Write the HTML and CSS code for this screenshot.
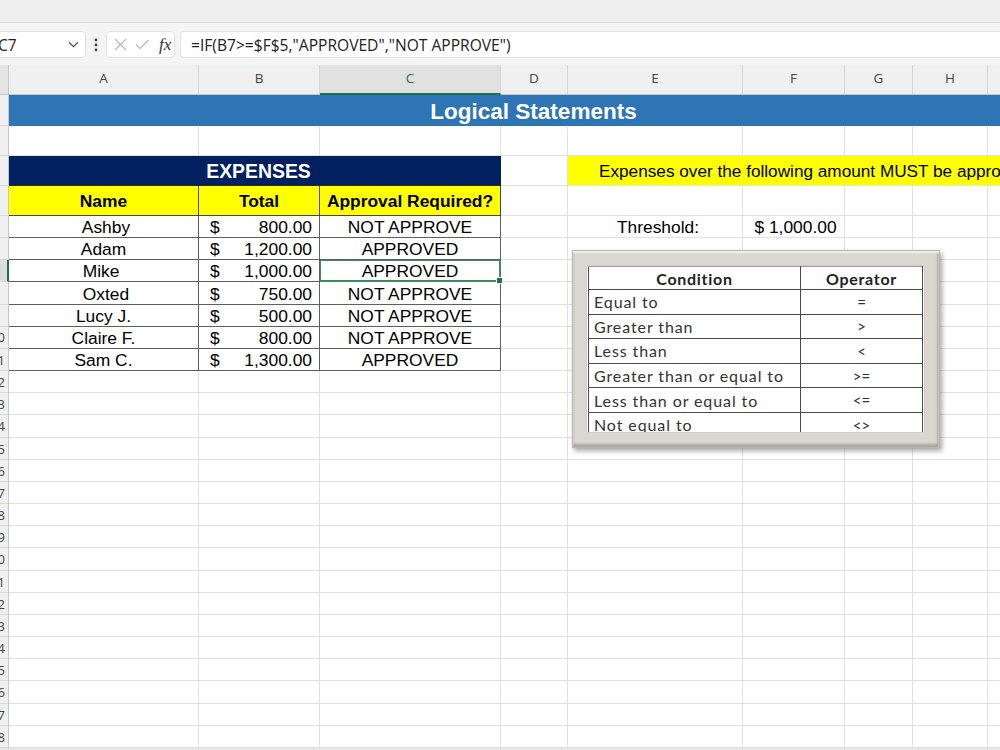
FILE: index.html
```html
<!DOCTYPE html>
<html>
<head>
<meta charset="utf-8">
<link rel="stylesheet" href="styles.css">
</head>
<body>
<div class="app">
  <div class="topstrip"></div>
  <div class="fbar">
    <div class="namebox">
      <span class="nb-text">C7</span>
      <svg class="chev" width="11" height="7" viewBox="0 0 11 7"><path d="M1 1.2l4.5 4.5 4.5-4.5" fill="none" stroke="#555" stroke-width="1.3"/></svg>
    </div>
    <svg class="kebab" width="4" height="14" viewBox="0 0 4 14"><circle cx="2" cy="2" r="1.4" fill="#444"/><circle cx="2" cy="7" r="1.4" fill="#444"/><circle cx="2" cy="12" r="1.4" fill="#444"/></svg>
    <div class="fxbox">
      <svg width="13" height="13" viewBox="0 0 13 13"><path d="M1 1l11 11M12 1L1 12" stroke="#b8b8b8" stroke-width="1.2" fill="none"/></svg>
      <svg width="14" height="11" viewBox="0 0 14 11"><path d="M1 5.5l4 4 8.5-8.5" stroke="#b8b8b8" stroke-width="1.2" fill="none"/></svg>
      <span class="fx">fx</span>
    </div>
    <div class="formula">=IF(B7&gt;=$F$5,"APPROVED","NOT APPROVE")</div>
  </div>

  <div class="sheet">
    <!-- column headers -->
    <div class="corner"></div>
    <div class="hc">A</div>
    <div class="hc">B</div>
    <div class="hc selc">C</div>
    <div class="hc">D</div>
    <div class="hc">E</div>
    <div class="hc">F</div>
    <div class="hc">G</div>
    <div class="hc">H</div>
    <div class="hc">I</div>

    <!-- row 1 -->
    <div class="rh"></div>
    <div class="c title">Logical Statements</div>

    <!-- row 2 -->
    <div class="rh"></div>
    <div class="c"></div><div class="c"></div><div class="c"></div><div class="c"></div><div class="c"></div><div class="c"></div><div class="c"></div><div class="c"></div><div class="c"></div>

    <!-- row 3 -->
    <div class="rh"></div>
    <div class="c banner">EXPENSES</div>
    <div class="c"></div>
    <div class="c note">Expenses over the following amount MUST be approved</div>

    <!-- row 4 -->
    <div class="rh"></div>
    <div class="c t hd">Name</div>
    <div class="c t hd">Total</div>
    <div class="c t hd">Approval Required?</div>
    <div class="c"></div><div class="c"></div><div class="c"></div><div class="c"></div><div class="c"></div><div class="c"></div>

    <!-- row 5 -->
    <div class="rh"></div>
    <div class="c t ctr nm1">Ashby</div>
    <div class="c t amt"><span>$</span><span>800.00</span></div>
    <div class="c t ctr">NOT APPROVE</div>
    <div class="c"></div>
    <div class="c ctr thr">Threshold:</div>
    <div class="c ctr thv">$ 1,000.00</div>
    <div class="c"></div><div class="c"></div><div class="c"></div>

    <!-- row 6 -->
    <div class="rh"></div>
    <div class="c t ctr">Adam</div>
    <div class="c t amt"><span>$</span><span>1,200.00</span></div>
    <div class="c t ctr">APPROVED</div>
    <div class="c"></div><div class="c"></div><div class="c"></div><div class="c"></div><div class="c"></div><div class="c"></div>

    <!-- row 7 -->
    <div class="rh selr"></div>
    <div class="c t ctr nm3">Mike</div>
    <div class="c t amt"><span>$</span><span>1,000.00</span></div>
    <div class="c t ctr sel">APPROVED</div>
    <div class="c"></div><div class="c"></div><div class="c"></div><div class="c"></div><div class="c"></div><div class="c"></div>

    <!-- row 8 -->
    <div class="rh"></div>
    <div class="c t ctr nm1">Oxted</div>
    <div class="c t amt"><span>$</span><span>750.00</span></div>
    <div class="c t ctr">NOT APPROVE</div>
    <div class="c"></div><div class="c"></div><div class="c"></div><div class="c"></div><div class="c"></div><div class="c"></div>

    <!-- row 9 -->
    <div class="rh"></div>
    <div class="c t ctr">Lucy J.</div>
    <div class="c t amt"><span>$</span><span>500.00</span></div>
    <div class="c t ctr">NOT APPROVE</div>
    <div class="c"></div><div class="c"></div><div class="c"></div><div class="c"></div><div class="c"></div><div class="c"></div>

    <!-- row 10 -->
    <div class="rh"><span>10</span></div>
    <div class="c t ctr">Claire F.</div>
    <div class="c t amt"><span>$</span><span>800.00</span></div>
    <div class="c t ctr">NOT APPROVE</div>
    <div class="c"></div><div class="c"></div><div class="c"></div><div class="c"></div><div class="c"></div><div class="c"></div>

    <!-- row 11 -->
    <div class="rh"><span>11</span></div>
    <div class="c t ctr">Sam C.</div>
    <div class="c t amt"><span>$</span><span>1,300.00</span></div>
    <div class="c t ctr">APPROVED</div>
    <div class="c"></div><div class="c"></div><div class="c"></div><div class="c"></div><div class="c"></div><div class="c"></div>

    <!-- rows 12-28 -->
    <div class="filler">
      <div class="fcol rhcol">
        <div class="rn"><span>12</span></div><div class="rn"><span>13</span></div><div class="rn"><span>14</span></div>
        <div class="rn"><span>15</span></div><div class="rn"><span>16</span></div><div class="rn"><span>17</span></div>
        <div class="rn"><span>18</span></div><div class="rn"><span>19</span></div><div class="rn"><span>20</span></div>
        <div class="rn"><span>21</span></div><div class="rn"><span>22</span></div><div class="rn"><span>23</span></div>
        <div class="rn"><span>24</span></div><div class="rn"><span>25</span></div><div class="rn"><span>26</span></div>
        <div class="rn"><span>27</span></div><div class="rn"><span>28</span></div>
      </div>
      <div class="fcol"></div><div class="fcol"></div><div class="fcol"></div><div class="fcol"></div><div class="fcol"></div>
      <div class="fcol"></div><div class="fcol"></div><div class="fcol"></div><div class="fcol"></div>
    </div>

    <!-- floating picture -->
    <div class="picture">
      <div class="pic-inner">
        <table class="ops">
          <tr><th class="cond">Condition</th><th class="op">Operator</th></tr>
          <tr><td class="cond">Equal to</td><td class="op">=</td></tr>
          <tr><td class="cond">Greater than</td><td class="op">&gt;</td></tr>
          <tr><td class="cond">Less than</td><td class="op">&lt;</td></tr>
          <tr><td class="cond">Greater than or equal to</td><td class="op">&gt;=</td></tr>
          <tr><td class="cond">Less than or equal to</td><td class="op">&lt;=</td></tr>
          <tr><td class="cond">Not equal to</td><td class="op">&lt;&gt;</td></tr>
        </table>
      </div>
    </div>
  </div>
  <div class="hscroll"></div>
</div>
</body>
</html>
```

FILE: styles.css
```css
:root {
  --cols: 9px 190px 121px 181px 67px 175px 102px 68px 75px 80px;
  --grid: #e1e1e1;
  --tb: #5e5e5e;
  --green: #1e7145;
}

* { box-sizing: border-box; }

html, body {
  margin: 0;
  padding: 0;
  background: #ffffff;
}

.app {
  width: 1000px;
  height: 750px;
  overflow: hidden;
  display: flex;
  flex-direction: column;
  font-family: "Liberation Sans", Arial, sans-serif;
}

.topstrip {
  height: 23px;
  flex: 0 0 23px;
  background: #eeeeee;
  border-bottom: 1px solid #d9d9d9;
  box-shadow: 0 1px 2px rgba(0,0,0,0.06);
}

.fbar {
  height: 42px;
  flex: 0 0 42px;
  background: #f4f4f4;
  display: flex;
  align-items: center;
  padding-top: 1px;
}

.namebox {
  margin-left: -10px;
  width: 96px;
  height: 27px;
  background: #fff;
  border: 1px solid #dedede;
  border-radius: 4px;
  display: flex;
  align-items: center;
  justify-content: space-between;
  padding: 0 6px 0 7px;
}

.nb-text {
  font-family: "Open Sans", "Noto Sans", sans-serif;
  font-size: 15.5px;
  color: #222;
}

.kebab {
  margin-left: 8px;
  margin-right: 8px;
}

.fxbox {
  width: 69px;
  height: 27px;
  background: #fff;
  border: 1px solid #e2e2e2;
  border-radius: 4px;
  display: flex;
  align-items: center;
  gap: 8px;
  padding-left: 7px;
}

.fx {
  font-family: "Liberation Serif", "Times New Roman", serif;
  font-style: italic;
  font-size: 17px;
  color: #333;
  margin-left: 2px;
}

.formula {
  margin-left: 5px;
  flex: 1;
  height: 27px;
  background: #fff;
  border: 1px solid #e2e2e2;
  border-right: none;
  border-radius: 4px 0 0 4px;
  display: flex;
  align-items: center;
  padding-left: 10px;
  font-family: "Open Sans", "Noto Sans", sans-serif;
  font-size: 15.6px;
  color: #222;
  white-space: nowrap;
}

.sheet {
  position: relative;
  width: 1068px;
  display: grid;
  grid-template-columns: var(--cols);
  grid-template-rows: 30px 31px 30px 30px 30px repeat(7, 22.17px) 377px;
  flex: 0 0 auto;
}

.corner {
  background: #e4e4e4;
  border-right: 1px solid #c8c8c8;
  border-bottom: 1px solid #c8c8c8;
}

.hc {
  background: #f0f0f0;
  border-right: 1px solid #d6d6d6;
  border-bottom: 1px solid #c8c8c8;
  display: flex;
  align-items: center;
  justify-content: center;
  padding-bottom: 3px;
  font-family: "Open Sans", "Noto Sans", sans-serif;
  font-size: 13.5px;
  color: #444;
}

.hc.selc {
  background: #e1e1e1;
  border-bottom: 2px solid var(--green);
  color: var(--green);
  padding-bottom: 2px;
}

.rh {
  background: #f0f0f0;
  border-right: 1px solid #c8c8c8;
  border-bottom: 1px solid #d8d8d8;
  overflow: hidden;
  display: flex;
  align-items: center;
  justify-content: flex-end;
  padding-right: 3px;
  font-family: "Open Sans", "Noto Sans", sans-serif;
  font-size: 13px;
  color: #444;
}

.rh span, .rn span {
  flex: 0 0 auto;
  white-space: nowrap;
}

.rh.selr {
  background: #dcdcdc;
  border-right: 2px solid var(--green);
}

.c {
  border-right: 1px solid var(--grid);
  border-bottom: 1px solid var(--grid);
  font-size: 17.4px;
  color: #000;
  display: flex;
  align-items: center;
  padding-top: 2px;
  white-space: nowrap;
  overflow: visible;
}

.ctr { justify-content: center; }

.nm1 { padding-left: 5px; }
.nm3 { padding-right: 5px; }
.thr { padding-left: 6px; }
.thv { padding-left: 4px; }

.title {
  grid-column: 2 / -1;
  background: #2e75b6;
  border-right: none;
  border-bottom: none;
  color: #fff;
  font-weight: bold;
  font-size: 22.5px;
  justify-content: center;
  padding-right: 10px;
}

.banner {
  grid-column: 2 / 5;
  background: #002060;
  color: #fff;
  font-weight: bold;
  font-size: 19.4px;
  justify-content: center;
  border-right: 1px solid #002060;
  border-bottom: 1px solid #2a2a2a;
  padding-left: 8px;
}

.note {
  grid-column: 6 / -1;
  background: #ffff00;
  border-right: none;
  border-bottom: 1px solid #e8e8c0;
  padding-left: 31px;
  font-size: 17.2px;
  overflow: hidden;
}

.t {
  border-right-color: var(--tb);
  border-bottom-color: var(--tb);
}

.hd {
  background: #ffff00;
  font-weight: bold;
  justify-content: center;
  border-right-color: #444;
  border-bottom-color: #444;
}

.amt {
  justify-content: space-between;
  padding-left: 11px;
  padding-right: 7px;
}

.sel {
  position: relative;
  box-shadow: inset 0 0 0 1px #3f8a5c;
  border-bottom-color: #3f8a5c;
  border-right-color: #3f8a5c;
}

.sel::after {
  content: "";
  position: absolute;
  right: -3px;
  bottom: -3px;
  width: 5px;
  height: 5px;
  background: var(--green);
  border: 1px solid #fff;
}

.filler {
  grid-column: 1 / -1;
  display: grid;
  grid-template-columns: var(--cols);
  height: 377px;
}

.fcol {
  border-right: 1px solid var(--grid);
  background-image: repeating-linear-gradient(to bottom, transparent 0, transparent 21.17px, var(--grid) 21.17px, var(--grid) 22.17px);
}

.fcol.rhcol {
  background-color: #f0f0f0;
  background-image: repeating-linear-gradient(to bottom, transparent 0, transparent 21.17px, #d8d8d8 21.17px, #d8d8d8 22.17px);
  border-right-color: #c8c8c8;
  display: flex;
  flex-direction: column;
  overflow: hidden;
}

.rn {
  height: 22.17px;
  flex: 0 0 22.17px;
  display: flex;
  align-items: center;
  justify-content: flex-end;
  padding-right: 3px;
  overflow: hidden;
  font-family: "Open Sans", "Noto Sans", sans-serif;
  font-size: 13px;
  color: #444;
}

.hscroll {
  flex: 1;
  background: #e6e6e6;
}

/* floating picture */
.picture {
  position: absolute;
  left: 572px;
  top: 185px;
  width: 368px;
  height: 198px;
  background: #d9d7cf;
  border: 1px solid #b9b6ac;
  box-shadow: 2px 3px 5px rgba(0,0,0,0.35), inset 0 2px 2px #f4f3ee, inset 0 -3px 3px #a8a59b, inset -2px 0 2px #b3b0a6;
  padding: 15px 15px 0 14px;
}

.pic-inner {
  width: 337px;
  height: 166px;
  background: #fff;
  overflow: hidden;
  box-shadow: 0 0 1px rgba(0,0,0,0.25);
}

.ops {
  border-collapse: collapse;
  margin-left: 1px;
  width: 335px;
  font-family: "Lato", "Open Sans", sans-serif;
  color: #333;
}

.ops th, .ops td {
  border: 1px solid #4a4a4a;
  padding: 0;
  height: 24.6px;
  font-size: 16px;
  letter-spacing: 0.9px;
}

.ops tr:first-child th {
  border-top: 1px solid #9a9a9a;
  height: 23px;
  font-weight: bold;
  color: #222;
  letter-spacing: 0.7px;
}

.ops .cond {
  width: 212px;
  text-align: left;
  padding-left: 5px;
}

.ops th.cond {
  text-align: center;
  padding-left: 0;
}

.ops .op {
  text-align: center;
  font-size: 15px;
  letter-spacing: 0;
}

.ops th.op {
  font-size: 16px;
  letter-spacing: 0.7px;
}
```
